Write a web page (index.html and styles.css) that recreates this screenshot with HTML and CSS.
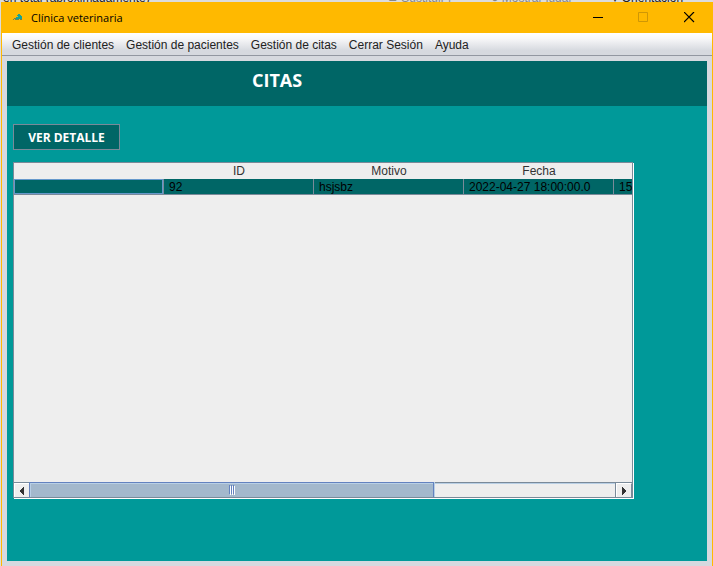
FILE: index.html
```html
<!DOCTYPE html>
<html lang="es">
<head>
<meta charset="utf-8">
<title>Clínica veterinaria</title>
<link rel="stylesheet" href="styles.css">
</head>
<body>
<div class="backdrop" aria-hidden="true"><span class="backdrop-main">en total (aproximadamente)</span><span>▰ Sustituir |</span><span>● Mostrar lugar</span><span class="dark">▾ Orientación</span></div>
<main class="window">
  <header class="titlebar">
    <svg class="app-icon" viewBox="0 0 10 10" width="10" height="10" shape-rendering="crispEdges">
      <path fill="#16a394" d="M4 2h1V1h2v1h1v1h1v3H8v1H7V6H4v1H3V4h2V3H4z"/>
      <path fill="#6f7f52" d="M1 5h2v2H2V6H1v1H0V6h1zM7 6h2v1H7zM4 6h2v1H4z"/>
    </svg>
    <span class="title">Clínica veterinaria</span>
    <button class="win-btn" aria-label="Minimizar"><svg width="11" height="11" shape-rendering="crispEdges"><path d="M1 5h10v1H1z"/></svg></button>
    <button class="win-btn" aria-label="Maximizar" disabled><svg width="11" height="11"><path d="M.5.5h9v9h-9z" fill="none" stroke="#cf9705"/></svg></button>
    <button class="win-btn" aria-label="Cerrar"><svg width="11" height="11"><path d="M0 0l10 10M10 0L0 10" fill="none" stroke="#000" stroke-width="1.2"/></svg></button>
  </header>
  <nav class="menu">
    <button>Gestión de clientes</button>
    <button>Gestión de pacientes</button>
    <button>Gestión de citas</button>
    <button>Cerrar Sesión</button>
    <button>Ayuda</button>
  </nav>
  <section class="content">
    <div class="banner"><h1>CITAS</h1></div>
    <div class="body">
      <button class="detail">VER DETALLE</button>
      <div class="scrollpane">
        <div class="viewport">
          <table>
            <colgroup><col><col><col><col><col></colgroup>
            <thead><tr><th></th><th>ID</th><th>Motivo</th><th>Fecha</th><th></th></tr></thead>
            <tbody><tr><td class="focus"></td><td>92</td><td>hsjsbz</td><td>2022-04-27 18:00:00.0</td><td>15</td></tr></tbody>
          </table>
        </div>
        <div class="scrollbar">
          <button class="arrow" aria-label="Desplazar a la izquierda"><svg width="4" height="8" shape-rendering="crispEdges"><path fill="#333" d="M3 0h1v8H3V7H2V6H1V5H0V3h1V2h1V1h1z"/></svg></button>
          <div class="track"><div class="thumb"><svg width="6" height="10" shape-rendering="crispEdges"><path fill="#6382bf" d="M0 0h1v9H0zM2 0h1v9H2zM4 0h1v9H4z"/><path fill="#fff" d="M1 1h1v9H1zM3 1h1v9H3zM5 1h1v9H5z"/></svg></div></div>
          <button class="arrow end" aria-label="Desplazar a la derecha"><svg width="4" height="8" shape-rendering="crispEdges"><path fill="#333" d="M0 0h1v1h1v1h1v1h1v2H3v1H2v1H1v1H0z"/></svg></button>
        </div>
      </div>
    </div>
  </section>
</main>
</body>
</html>
```

FILE: styles.css
```css
* { box-sizing: border-box; }
body {
  margin: 0;
  min-height: 100vh;
  display: flex;
  flex-direction: column;
  background: #dcdcdc;
  font-family: "Liberation Sans", Arial, sans-serif;
  font-size: 12px;
  color: #222;
}
button { font: inherit; color: inherit; border: 0; padding: 0; background: none; }
svg { display: block; }
.backdrop {
  height: 2px;
  overflow: hidden;
  display: flex;
  align-items: flex-end;
  gap: 40px;
  padding-left: 3px;
  line-height: 8px;
  white-space: nowrap;
  color: #888;
}
.backdrop-main { flex: 0 0 346px; color: #222; }
.dark { color: #222; }
.window {
  flex: 1;
  display: flex;
  flex-direction: column;
  margin-left: 1px;
  border: solid #ffb900;
  border-width: 0 1px;
  background: #d6d9df;
}
.titlebar {
  height: 31px;
  display: flex;
  align-items: center;
  background: #ffb900;
  color: #000;
  font-family: "Open Sans", "Noto Sans", sans-serif;
  font-size: 11px;
}
.app-icon { margin: 0 8px 0 11px; }
.title { flex: 1; }
.win-btn { width: 46px; height: 31px; display: grid; place-items: center; }
.menu {
  height: 23px;
  display: flex;
  align-items: center;
  gap: 12px;
  padding: 2px 0 0 10px;
  border-bottom: 1px solid #9297a1;
  background: linear-gradient(#fff, #f8f8f9 25%, #d6d9df 80%);
}
.content {
  flex: 1;
  margin: 5px;
  display: flex;
  flex-direction: column;
  background: #009999;
}
.banner { height: 45px; padding: 7px 0 0 245px; background: #006666; }
h1 {
  margin: 0;
  color: #fff;
  font: bold 18px/24px "Open Sans", "Noto Sans", sans-serif;
}
.body { padding: 18px 74px 0 6px; }
.detail {
  display: block;
  width: 107px;
  height: 26px;
  padding-top: 2px;
  border: 1px solid #7a8a99;
  background: #006666;
  color: #fff;
  font: bold 12px/16px "Open Sans", "Noto Sans", sans-serif;
}
.scrollpane {
  margin-top: 12px;
  border: 1px solid #7a8a99;
  box-shadow: 1px 1px #fff;
  background: #eee;
}
.viewport { height: 319px; overflow: hidden; }
table { width: 750px; table-layout: fixed; border-collapse: separate; border-spacing: 0; }
th { height: 16px; padding: 1px 0 0; font-weight: normal; line-height: 15px; color: #333; }
td {
  height: 16px;
  padding: 1px 5px 0;
  border: solid #7a8a99;
  border-width: 0 1px 1px 0;
  background: #006666;
  color: #000;
  line-height: 14px;
}
.focus { box-shadow: inset 0 0 0 1px #6699cc; }
.scrollbar { height: 15px; display: flex; border-top: 1px solid #7a8a99; }
.arrow { width: 15px; display: grid; place-items: center; border: solid #fff; border-width: 1px 0 0 1px; }
.end { width: 16px; border-right: 1px solid #7a8a99; box-shadow: -1px 0 #7a8a99; }
.track { flex: 1; box-shadow: inset 0 1px #b8cfe5; }
.thumb {
  width: 69%;
  height: 15px;
  margin-top: -1px;
  display: grid;
  place-items: center;
  border: solid #6382bf;
  border-width: 1px 1px 0;
  box-shadow: inset 1px 1px #b8cfe5, 1px 0 #b8cfe5;
  background: #a3b8cc;
}
```
